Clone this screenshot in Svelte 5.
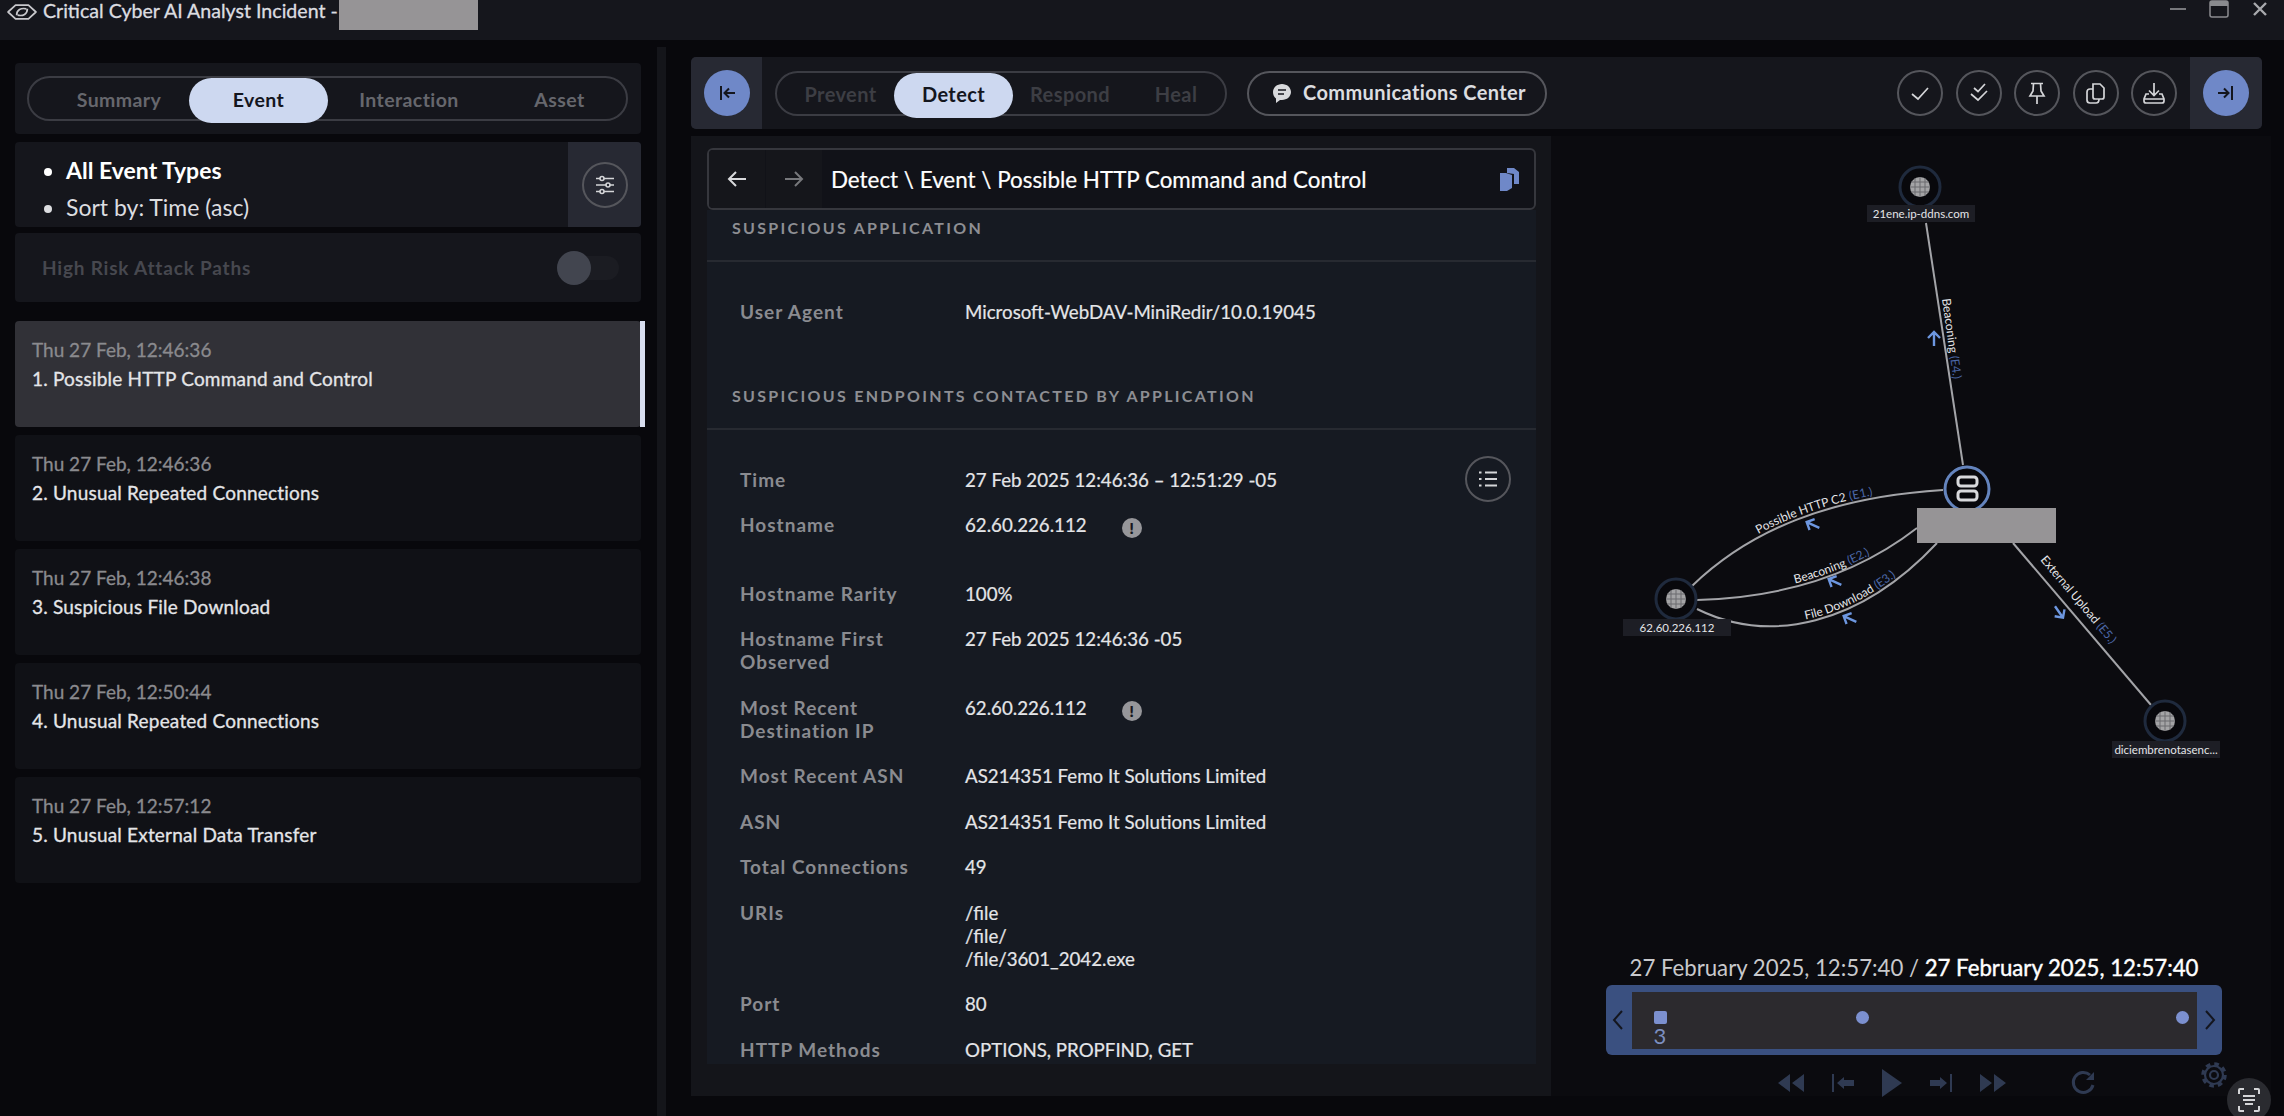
<script>
	const tabs = ['Summary', 'Event', 'Interaction', 'Asset'];
	const stages = ['Prevent', 'Detect', 'Respond', 'Heal'];

	const events = [
		{ time: 'Thu 27 Feb, 12:46:36', title: '1. Possible HTTP Command and Control', active: true },
		{ time: 'Thu 27 Feb, 12:46:36', title: '2. Unusual Repeated Connections' },
		{ time: 'Thu 27 Feb, 12:46:38', title: '3. Suspicious File Download' },
		{ time: 'Thu 27 Feb, 12:50:44', title: '4. Unusual Repeated Connections' },
		{ time: 'Thu 27 Feb, 12:57:12', title: '5. Unusual External Data Transfer' }
	];

	const rows = [
		{ key: 'Time', value: ['27 Feb 2025 12:46:36 – 12:51:29 -05'] },
		{ key: 'Hostname', value: ['62.60.226.112'], warn: true, spaced: true },
		{ key: 'Hostname Rarity', value: ['100%'] },
		{ key: 'Hostname First Observed', value: ['27 Feb 2025 12:46:36 -05'] },
		{ key: 'Most Recent Destination IP', value: ['62.60.226.112'], warn: true },
		{ key: 'Most Recent ASN', value: ['AS214351 Femo It Solutions Limited'] },
		{ key: 'ASN', value: ['AS214351 Femo It Solutions Limited'] },
		{ key: 'Total Connections', value: ['49'] },
		{ key: 'URIs', value: ['/file', '/file/', '/file/3601_2042.exe'] },
		{ key: 'Port', value: ['80'] },
		{ key: 'HTTP Methods', value: ['OPTIONS, PROPFIND, GET'] }
	];

	const globes = [
		{ x: 1920, y: 187, label: '21ene.ip-ddns.com', bx: 1867, by: 205 },
		{ x: 1676, y: 599, label: '62.60.226.112', bx: 1623, by: 619 },
		{ x: 2165, y: 721, label: 'diciembrenotasenc...', bx: 2112, by: 741 }
	];

	// curved edges carry their label along the line
	const curves = [
		{ id: 'edge-c2', d: 'M1692 586 C1750 530 1830 497 1943 490', text: 'Possible HTTP C2', tag: '(E1.)', offset: 84 },
		{ id: 'edge-beacon', d: 'M1697 600 C1770 598 1850 580 1917 528', text: 'Beaconing', tag: '(E2.)', offset: 100 },
		{ id: 'edge-file', d: 'M1697 609 C1770 645 1860 625 1937 543', text: 'File Download', tag: '(E3.)', offset: 112 }
	];

	const edges = [
		{ text: 'Beaconing', tag: '(E4.)', x: 1942, y: 299, r: 82 },
		{ text: 'External Upload', tag: '(E5.)', x: 2040, y: 560, r: 50 }
	];

	const arrows = [
		{ x: 1934, y: 339, r: -90 },
		{ x: 1813, y: 525, r: 205 },
		{ x: 1835, y: 582, r: 205 },
		{ x: 1850, y: 619, r: 205 },
		{ x: 2059, y: 612, r: 55 }
	];
</script>

<div class="app">
	<header class="titlebar">
		<svg class="logo" viewBox="0 0 28 20" fill="none" stroke="#c8c8cc" stroke-width="1.6">
			<path d="M1 10 L8 3.5 H20 L27 10 L20 16.5 H8 Z" stroke-linejoin="round" />
			<path d="M9 13 C9 8 13 6 18 7 M19 7 C19 12 15 14 10 13" />
		</svg>
		<span class="window-title">Critical Cyber AI Analyst Incident -</span>
		<div class="redacted title-redacted"></div>
		<div class="window-controls">
			<svg width="18" height="18" viewBox="0 0 18 18"><rect x="1" y="8" width="16" height="2" fill="#77787c" /></svg>
			<svg width="22" height="18" viewBox="0 0 22 18" fill="none">
				<rect x="2" y="1" width="18" height="16" rx="2" stroke="#8a8b8f" stroke-width="1.5" />
				<rect x="2" y="1" width="18" height="5" fill="#8a8b8f" />
			</svg>
			<svg width="18" height="18" viewBox="0 0 18 18" stroke="#a8a9ad" stroke-width="2.4">
				<path d="M3 3 L15 15 M15 3 L3 15" />
			</svg>
		</div>
	</header>

	<div class="body">
		<aside class="side">
			<div class="card tabs-card">
				<div class="pill tabs">
					{#each tabs as tab}
						<span class:on={tab === 'Event'}>{tab}</span>
					{/each}
				</div>
			</div>

			<div class="card filter-card">
				<ul>
					<li class="strong">All Event Types</li>
					<li>Sort by: Time (asc)</li>
				</ul>
				<div class="filter-box">
					<div class="round">
						<svg width="22" height="22" viewBox="0 0 22 22" fill="none" stroke="#d4d5d8" stroke-width="1.6">
							<path d="M2 4.5 H20 M2 11 H20 M2 17.5 H20" />
							<circle cx="8" cy="4.5" r="2" fill="#272933" />
							<circle cx="14" cy="11" r="2" fill="#272933" />
							<circle cx="8" cy="17.5" r="2" fill="#272933" />
						</svg>
					</div>
				</div>
			</div>

			<div class="card risk-card">
				<span>High Risk Attack Paths</span>
				<div class="toggle"><i></i></div>
			</div>

			<div class="events">
				{#each events as ev}
					<div class="event" class:active={ev.active}>
						<div class="event-time">{ev.time}</div>
						<div class="event-title">{ev.title}</div>
					</div>
				{/each}
			</div>
		</aside>

		<div class="divider"></div>

		<main class="workspace">
			<div class="topbar">
				<div class="edge-box">
					<div class="blue-btn">
						<svg width="22" height="22" viewBox="0 0 22 22" fill="none" stroke="#14161e" stroke-width="2">
							<path d="M5 4 V18 M19 11 H9 M13 6.5 L8.5 11 L13 15.5" />
						</svg>
					</div>
				</div>
				<div class="pill stages">
					{#each stages as stage}
						<span class:on={stage === 'Detect'}>{stage}</span>
					{/each}
				</div>
				<div class="pill comms">
					<svg width="22" height="22" viewBox="0 0 22 22">
						<path d="M11 2 C16 2 20 5.6 20 10 C20 14.4 16 18 11 18 H9 L5 21 V16.6 C3 15 2 12.6 2 10 C2 5.6 6 2 11 2 Z" fill="#d8d9dc" />
						<path d="M7 8 H15 M7 12 H13" stroke="#15161c" stroke-width="1.6" />
					</svg>
					<span>Communications Center</span>
				</div>
				<div class="actions">
					<div class="round">
						<svg width="24" height="24" viewBox="0 0 24 24" fill="none" stroke="#d4d5d8" stroke-width="1.7">
							<path d="M4 13 L10 18 L20 7" />
						</svg>
					</div>
					<div class="round">
						<svg width="24" height="24" viewBox="0 0 24 24" fill="none" stroke="#d4d5d8" stroke-width="1.7">
							<path d="M7 7 L11 10.5 L18 3 M4 13 L11 19 L20 10" />
						</svg>
					</div>
					<div class="round">
						<svg width="24" height="24" viewBox="0 0 24 24" fill="none" stroke="#d4d5d8" stroke-width="1.7">
							<path d="M6 2.5 H18 M8.5 2.5 L8 10 L5 15 H19 L16 10 L15.5 2.5 M12 15 V23" />
						</svg>
					</div>
					<div class="round">
						<svg width="24" height="24" viewBox="0 0 24 24" fill="none" stroke="#d4d5d8" stroke-width="1.7">
							<path d="M9 3 H16 L20 7 V16 Q20 18 18 18 H11 Q9 18 9 16 Z" />
							<path d="M9 8 H6 Q3 8 3 11 V19 Q3 22 6 22 H12 Q15 22 15 18" />
						</svg>
					</div>
					<div class="round">
						<svg width="24" height="24" viewBox="0 0 24 24" fill="none" stroke="#d4d5d8" stroke-width="1.7">
							<path d="M12 2 V14 M7 9.5 L12 14.5 L17 9.5" />
							<path d="M7 13 H4 L2 18 V20 Q2 22 4 22 H20 Q22 22 22 20 V18 L20 13 H17 M2 18 H22" />
						</svg>
					</div>
				</div>
				<div class="edge-box right">
					<div class="blue-btn">
						<svg width="22" height="22" viewBox="0 0 22 22" fill="none" stroke="#14161e" stroke-width="2">
							<path d="M17 4 V18 M3 11 H13 M9 6.5 L13.5 11 L9 15.5" />
						</svg>
					</div>
				</div>
			</div>

			<div class="lower">
				<section class="detail">
					<div class="crumbs">
						<div class="crumb-btn">
							<svg width="24" height="24" viewBox="0 0 24 24" fill="none" stroke="#d8d9dc" stroke-width="2">
								<path d="M21 12 H4 M11 5 L4 12 L11 19" />
							</svg>
						</div>
						<div class="crumb-btn">
							<svg width="24" height="24" viewBox="0 0 24 24" fill="none" stroke="#77787c" stroke-width="2">
								<path d="M3 12 H20 M13 5 L20 12 L13 19" />
							</svg>
						</div>
						<div class="crumb-text">Detect \ Event \ Possible HTTP Command and Control</div>
						<svg class="crumb-copy" width="26" height="26" viewBox="0 0 26 26" fill="#6f88c8">
							<path d="M10 2 H17 L22 6 V18 H17 V8 L10 7 Z" />
							<path d="M3 7 H9 L15 9 V22 L10 25 H3 Z" />
						</svg>
					</div>

					<div class="sheet">
						<h3>SUSPICIOUS APPLICATION</h3>
						<div class="rows agent">
							<div class="k">User Agent</div>
							<div class="v">Microsoft-WebDAV-MiniRedir/10.0.19045</div>
						</div>
						<h3 class="second">SUSPICIOUS ENDPOINTS CONTACTED BY APPLICATION</h3>
						<div class="rows">
							<div class="round list-btn">
								<svg width="24" height="24" viewBox="0 0 24 24" fill="none" stroke="#d4d5d8" stroke-width="2">
									<path d="M9 5.5 H21 M9 12 H21 M9 18.5 H21 M3 5.5 H5.5 M3 12 H5.5 M3 18.5 H5.5" />
								</svg>
							</div>
							{#each rows as row}
								<div class="k" class:spaced={row.spaced}>{row.key}</div>
								<div class="v">
									{#each row.value as line}
										<div>{line}{#if row.warn}<span class="warn">!</span>{/if}</div>
									{/each}
								</div>
							{/each}
						</div>
					</div>
				</section>

				<section class="graph">
					<svg class="canvas" viewBox="1551 136 720 960" fill="none">
						<g stroke="#a3a4a8" stroke-width="2">
							<path d="M1926 223 L1963 465" />
							<path d="M2013 543 L2151 705" />
							{#each curves as c}
								<path id={c.id} d={c.d} />
							{/each}
						</g>
						{#each globes as g}
							<circle cx={g.x} cy={g.y} r="20" fill="#08080c" stroke="#1f2a3d" stroke-width="3" />
							<circle cx={g.x} cy={g.y} r="10" fill="#a4a4a6" />
							<path d="M{g.x - 10} {g.y} H{g.x + 10} M{g.x} {g.y - 10} V{g.y + 10} M{g.x - 9} {g.y - 5} H{g.x + 9} M{g.x - 9} {g.y + 5} H{g.x + 9} M{g.x - 5} {g.y - 9} V{g.y + 9} M{g.x + 5} {g.y - 9} V{g.y + 9}" stroke="#6a6b6f" />
							<rect x={g.bx} y={g.by} width="108" height="17" fill="#1d1e25" />
							<text x={g.bx + 54} y={g.by + 13} class="node-label" text-anchor="middle">{g.label}</text>
						{/each}

						<circle cx="1967" cy="489" r="22" fill="#08080c" stroke="#6484bd" stroke-width="3" />
						<rect x="1958" y="477" width="19" height="9" rx="3" fill="#08080c" stroke="#d8d9dc" stroke-width="3" />
						<rect x="1958" y="491" width="19" height="9" rx="3" fill="#08080c" stroke="#d8d9dc" stroke-width="3" />

						{#each curves as c}
							<text class="edge-label" dy="-3">
								<textPath href="#{c.id}" startOffset={c.offset}>{c.text} <tspan class="edge-tag">{c.tag}</tspan></textPath>
							</text>
						{/each}
						{#each edges as e}
							<text transform="translate({e.x} {e.y}) rotate({e.r})" class="edge-label">
								{e.text} <tspan class="edge-tag">{e.tag}</tspan>
							</text>
						{/each}
						{#each arrows as a}
							<path transform="translate({a.x} {a.y}) rotate({a.r})" d="M-7 0 H7 M1 -6 L7 0 L1 6" stroke="#6d97e0" stroke-width="2.4" />
						{/each}

						<rect x="1917" y="508" width="139" height="35" fill="#969496" />
					</svg>

					<div class="date-line">27 February 2025, 12:57:40 / <b>27 February 2025, 12:57:40</b></div>

					<div class="timeline">
						<svg width="14" height="24" viewBox="0 0 14 24" fill="none" stroke="#14161e" stroke-width="2"><path d="M11 3 L3 12 L11 21" /></svg>
						<div class="track">
							<i class="mark square"></i>
							<i class="mark dot mid"></i>
							<i class="mark dot end"></i>
							<span class="count">3</span>
						</div>
						<svg width="14" height="24" viewBox="0 0 14 24" fill="none" stroke="#14161e" stroke-width="2"><path d="M3 3 L11 12 L3 21" /></svg>
					</div>

					<div class="player">
						<svg width="28" height="24" viewBox="0 0 28 24" fill="#2f3a52"><path d="M13 3 V21 L1 12 Z M27 3 V21 L15 12 Z" /></svg>
						<svg width="26" height="24" viewBox="0 0 26 24" fill="#2f3a52"><path d="M2 3 H4 V21 H2 Z M7 12 L14 6 V9 H24 V15 H14 V18 Z" /></svg>
						<svg width="22" height="30" viewBox="0 0 22 30" fill="#2f3a52"><path d="M1 1 L21 15 L1 29 Z" /></svg>
						<svg width="26" height="24" viewBox="0 0 26 24" fill="#2f3a52"><path d="M22 3 H24 V21 H22 Z M19 12 L12 6 V9 H2 V15 H12 V18 Z" /></svg>
						<svg width="28" height="24" viewBox="0 0 28 24" fill="#2f3a52"><path d="M1 3 V21 L13 12 Z M15 3 V21 L27 12 Z" /></svg>
						<svg class="replay" width="26" height="26" viewBox="0 0 26 26" fill="none" stroke="#2f3a52" stroke-width="3"><path d="M20 5 A10 10 0 1 0 23 15" /><path d="M24 2 V10 H16" fill="#2f3a52" stroke="none" /></svg>
						<svg class="gear" width="28" height="28" viewBox="0 0 28 28" fill="none" stroke="#2f3a52">
							<circle cx="14" cy="14" r="9" stroke-width="2.2" />
							<circle cx="14" cy="14" r="11" stroke-width="3.5" stroke-dasharray="4.6 4.03" />
							<circle cx="14" cy="14" r="4" stroke-width="2.2" />
						</svg>
					</div>

					<div class="scan">
						<svg width="24" height="26" viewBox="0 0 24 26" fill="none" stroke="#d4d5d8" stroke-width="2">
							<path d="M2 7 V3 Q2 2 3 2 H7 M17 2 H21 Q22 2 22 3 V7 M2 19 V23 Q2 24 3 24 H7 M17 24 H21 Q22 24 22 23 V19 M6 9 H18 M6 13 H18 M8 17 H16" />
						</svg>
					</div>
				</section>
			</div>
		</main>
	</div>
</div>

<style>
	:global(body) {
		margin: 0;
		background: #08080c;
	}

	.app {
		width: 2284px;
		height: 1116px;
		overflow: hidden;
		background: #08080c;
		color: #e4e5e8;
		font-family: 'Lato', 'Noto Sans', sans-serif;
		font-size: 18px;
	}

	.titlebar {
		height: 40px;
		display: flex;
		align-items: flex-start;
		background: #15161c;
		padding-left: 7px;
	}

	.logo {
		width: 30px;
		height: 22px;
		margin-top: 1px;
	}

	.window-title {
		margin-left: 6px;
		font-size: 19.6px;
		line-height: 21px;
		-webkit-text-stroke: 0.3px;
		color: #dcdde0;
	}

	.redacted {
		background: #969496;
	}

	.title-redacted {
		width: 139px;
		height: 30px;
		margin-left: 1px;
	}

	.window-controls {
		margin-left: auto;
		margin-right: 15px;
		display: flex;
		gap: 21px;
	}

	.body {
		display: flex;
		height: 1069px;
		padding-top: 7px;
	}

	.side {
		width: 626px;
		padding: 16px 16px 0 15px;
		display: flex;
		flex-direction: column;
	}

	.card {
		background: #15161c;
		border-radius: 4px;
	}

	.pill {
		height: 45px;
		border: 2px solid #3b3c43;
		border-radius: 24px;
		box-sizing: border-box;
		display: grid;
		align-items: center;
		font-weight: 700;
		letter-spacing: 0.4px;
		color: #66676d;
	}

	.pill span {
		height: 45px;
		line-height: 43px;
		text-align: center;
		box-sizing: border-box;
	}

	.pill span.on {
		background: #cdd8f0;
		color: #14161e;
		border-radius: 24px;
	}

	.tabs-card {
		height: 71px;
		padding: 13px 13px 0 12px;
		box-sizing: border-box;
	}

	.tabs {
		grid-template-columns: 160px 139px 162px 139px;
		font-size: 19.5px;
	}

	.tabs span:first-child {
		padding-left: 20px;
	}

	.filter-card {
		height: 85px;
		margin-top: 8px;
		display: flex;
		justify-content: space-between;
		overflow: hidden;
	}

	.filter-card ul {
		margin: 0;
		padding: 10px 0 0 51px;
		font-size: 23px;
		line-height: 37px;
		color: #dcdde0;
	}

	.strong {
		font-weight: 700;
		color: #fff;
	}

	.filter-box {
		width: 73px;
		background: #272933;
		display: flex;
		align-items: center;
		justify-content: center;
	}

	.round {
		width: 46px;
		height: 46px;
		border: 2px solid #55565c;
		border-radius: 50%;
		box-sizing: border-box;
		display: flex;
		align-items: center;
		justify-content: center;
		flex: none;
	}

	.risk-card {
		height: 69px;
		margin-top: 6px;
		display: flex;
		align-items: center;
		justify-content: space-between;
		padding: 0 22px 0 27px;
		font-size: 19px;
		letter-spacing: 0.8px;
		font-weight: 700;
		color: #47484f;
	}

	.toggle {
		width: 62px;
		height: 24px;
		border-radius: 12px;
		background: #1b1c22;
		display: flex;
		align-items: center;
	}

	.toggle i {
		width: 34px;
		height: 34px;
		border-radius: 50%;
		background: #42454f;
	}

	.events {
		margin-top: 19px;
		display: flex;
		flex-direction: column;
		gap: 8px;
	}

	.event {
		height: 106px;
		box-sizing: border-box;
		padding: 17px 17px 0;
		background: #101116;
		border-radius: 4px;
		position: relative;
	}

	.event.active {
		background: #313137;
	}

	.event.active::after {
		content: '';
		position: absolute;
		right: -4px;
		top: 0;
		bottom: 0;
		width: 5px;
		background: #d8def0;
	}

	.event-time {
		font-size: 19px;
		line-height: 24px;
		color: #8a8a8e;
		-webkit-text-stroke: 0.3px;
	}

	.event-title {
		margin-top: 5px;
		font-size: 19px;
		letter-spacing: 0.2px;
		line-height: 24px;
		-webkit-text-stroke: 0.3px;
		color: #e4e5e8;
	}

	.divider {
		width: 9px;
		background: #14151a;
	}

	.workspace {
		width: 1571px;
		margin: 10px 0 0 25px;
	}

	.topbar {
		height: 72px;
		display: flex;
		align-items: center;
		background: #15161c;
		border-radius: 5px;
	}

	.edge-box {
		width: 71px;
		height: 72px;
		background: #272933;
		border-radius: 5px 0 0 5px;
		display: flex;
		align-items: center;
		justify-content: center;
		flex: none;
	}

	.edge-box.right {
		width: 72px;
		margin-left: 13px;
		border-radius: 0 5px 5px 0;
	}

	.blue-btn {
		width: 46px;
		height: 46px;
		border-radius: 50%;
		background: #6f88c8;
		display: flex;
		align-items: center;
		justify-content: center;
	}

	.stages {
		width: 452px;
		margin-left: 13px;
		grid-template-columns: 117px 119px 114px 98px;
		font-size: 20px;
		color: #3d3e44;
	}

	.stages span:first-child {
		padding-left: 10px;
	}

	.comms {
		width: 300px;
		margin-left: 20px;
		display: flex;
		align-items: center;
		gap: 10px;
		padding-left: 22px;
		font-size: 20px;
		border-color: #55565c;
		color: #dcdde0;
	}

	.actions {
		margin-left: auto;
		display: flex;
		gap: 12.5px;
	}

	.lower {
		display: flex;
		margin-top: 7px;
	}

	.detail {
		width: 860px;
		height: 960px;
		box-sizing: border-box;
		padding: 12px 15px 32px 16px;
		background: #14151a;
		flex: none;
		display: flex;
		flex-direction: column;
	}

	.crumbs {
		height: 62px;
		box-sizing: border-box;
		border: 2px solid #36373d;
		border-radius: 6px;
		background: #111218;
		display: flex;
		align-items: center;
		flex: none;
		overflow: hidden;
	}

	.crumb-btn {
		width: 56px;
		height: 100%;
		background: #15161b;
		display: flex;
		align-items: center;
		justify-content: center;
		margin-right: 1px;
	}

	.crumb-text {
		margin-left: 8px;
		font-size: 22.4px;
		-webkit-text-stroke: 0.2px;
		color: #fff;
	}

	.crumb-copy {
		margin-left: auto;
		margin-right: 11px;
	}

	.sheet {
		flex: 1;
		background: #161a22;
		overflow: hidden;
	}

	h3 {
		margin: 0;
		padding: 8px 25px 22px;
		line-height: 20px;
		font-size: 16px;
		font-weight: 700;
		letter-spacing: 2.3px;
		color: #8d8e93;
		border-bottom: 2px solid #272a31;
	}

	h3.second {
		margin-top: 54px;
	}

	.rows {
		position: relative;
		display: grid;
		grid-template-columns: 225px 1fr;
		row-gap: 22.8px;
		padding: 39px 33px 0;
		font-size: 18.7px;
		line-height: 22.8px;
	}

	.k {
		color: #8a8b90;
		font-size: 19px;
		letter-spacing: 1px;
		font-weight: 700;
		padding-right: 20px;
	}

	.k.spaced {
		margin-bottom: 22.8px;
	}

	.v {
		color: #e4e5e8;
		-webkit-text-stroke: 0.2px;
	}

	.warn {
		display: inline-block;
		width: 20px;
		height: 20px;
		margin-left: 35px;
		border-radius: 50%;
		background: #96969a;
		color: #14151a;
		font-size: 15px;
		font-weight: 900;
		line-height: 20px;
		text-align: center;
		vertical-align: -2px;
	}

	.list-btn {
		position: absolute;
		right: 25px;
		top: 26px;
	}

	.graph {
		position: relative;
		width: 720px;
		height: 960px;
		flex: none;
		margin-right: -9px;
		display: flex;
		flex-direction: column;
		background: #0b0b0f;
	}

	.graph > * {
		flex: none;
	}

	.canvas {
		position: absolute;
		inset: 0;
		width: 720px;
		height: 960px;
	}

	.node-label {
		fill: #e4e5e8;
		font-size: 11.5px;
	}

	.edge-label {
		fill: #e4e5e8;
		font-size: 12px;
	}

	.edge-tag {
		fill: #4c68a8;
	}

	.date-line {
		position: relative;
		margin-top: 817px;
		width: 616px;
		margin-left: 55px;
		text-align: center;
		white-space: nowrap;
		font-size: 22.2px;
		line-height: 30px;
		color: #c8c9cc;
	}

	.date-line b {
		color: #fff;
		font-weight: 400;
		-webkit-text-stroke: 0.4px;
	}

	.timeline {
		position: relative;
		width: 616px;
		height: 70px;
		margin: 2px 0 0 55px;
		background: #3a5080;
		border-radius: 6px;
		display: flex;
		align-items: center;
		justify-content: space-between;
		padding: 0 5px;
		box-sizing: border-box;
	}

	.track {
		position: relative;
		width: 565px;
		height: 57px;
		background: #2c2a2e;
		overflow: hidden;
	}

	.mark {
		position: absolute;
		top: 19px;
		width: 13px;
		height: 13px;
		background: #7c90cf;
	}

	.square {
		left: 22px;
		border-radius: 2px;
	}

	.dot {
		border-radius: 50%;
	}

	.mid {
		left: 224px;
	}

	.end {
		left: 544px;
	}

	.count {
		position: absolute;
		left: 22px;
		top: 31px;
		font-size: 22px;
		line-height: 26px;
		color: #7c8fc0;
	}

	.player {
		position: relative;
		margin: 13px 0 0 226px;
		display: flex;
		align-items: center;
		gap: 25px;
	}

	.replay {
		margin-left: 38px;
	}

	.gear {
		position: absolute;
		left: 423px;
		top: -7px;
	}

	.scan {
		position: absolute;
		left: 676px;
		top: 942px;
		width: 44px;
		height: 44px;
		border-radius: 50%;
		background: #2a2b30;
		display: flex;
		align-items: center;
		justify-content: center;
	}
</style>
